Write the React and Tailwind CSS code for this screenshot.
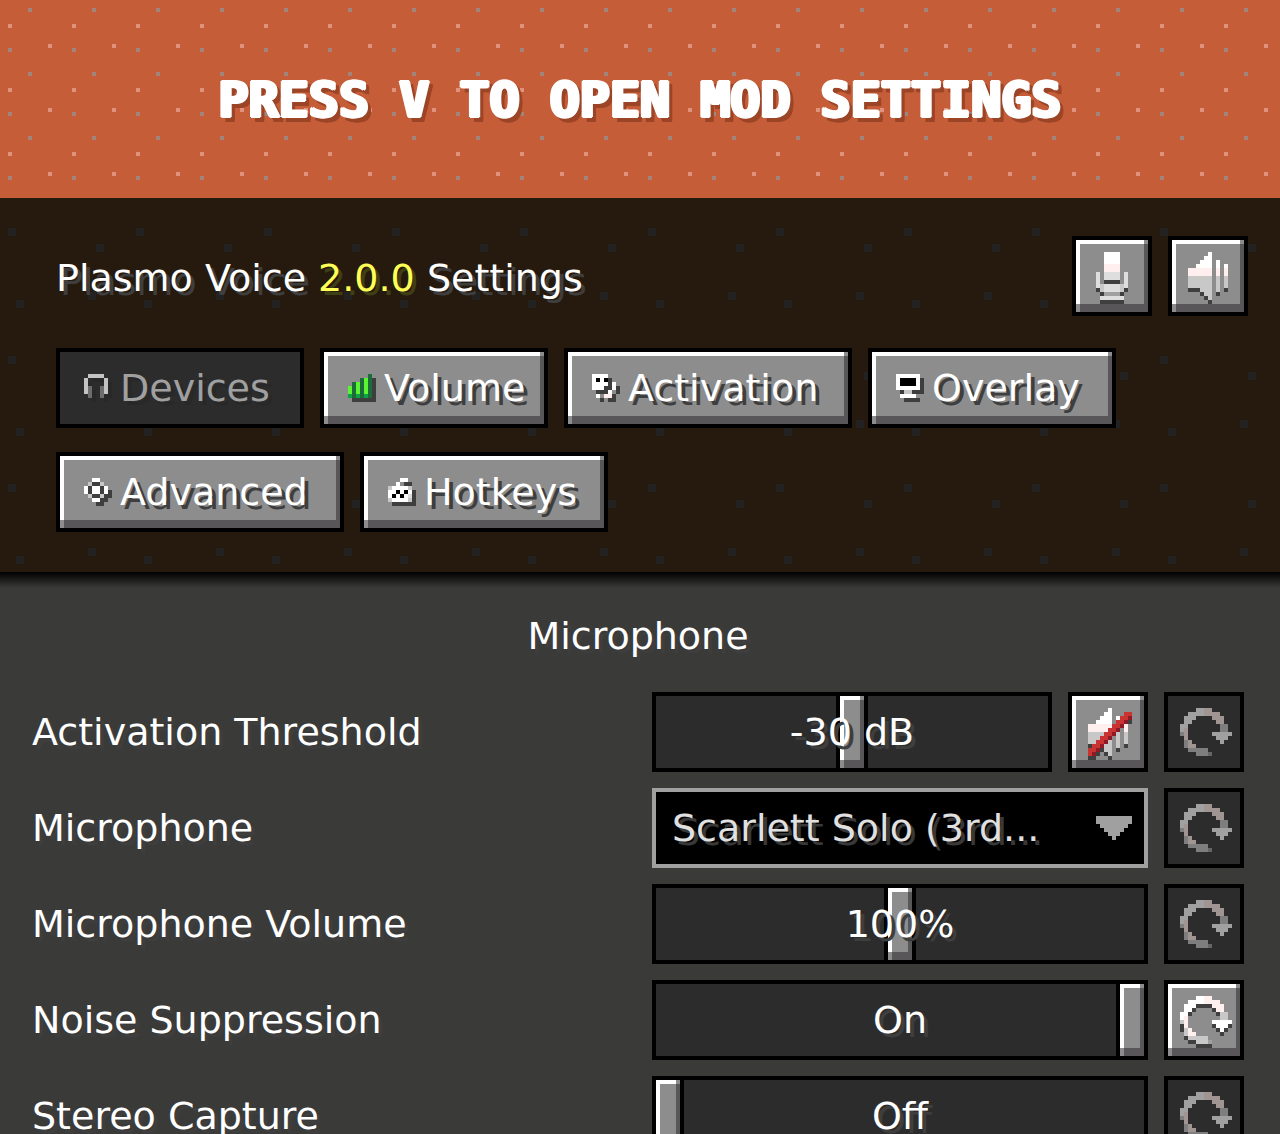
import React, { useState } from "react";

const BRIGHT = {
  W: "#ffffff", P: "#ffefee", L: "#dedede", M: "#c8c8c8", N: "#a0a0a0",
  D: "#3f3f3f", K: "#000000", R: "#c93331", r: "#8d1a26",
  G: "#5cf531", g: "#1d6b3b", e: "#0ba344", H: "#c4c4c4", h: "#6c6c6c",
};
const DIM = { W: "#a0a0a0", P: "#a09593", M: "#7e7e7e", N: "#666666" };

const MIC = [
  "..WWWW..", "..WWWW..", "..WWWW..", "..PPPP..", "..PPPP..", "L.LLLL.L", "L.LLLL.L",
  "L.DDDD.L", "LMLLLLML", "DMLLLLMD", ".DNNNND.", ".LLLLLL.", ".DDDDDD.",
];
const SPEAKER = [
  ".....W", "....WW", "...WWW.W", "..WWWW.W.W", "PPPPPP.P.P", "PPPPPP.P.P", "MMMMMM.M.M",
  "MMMMMM.M.M", "MMMMMM.M.M", "DDDMMM.M.D", "...DMM.D", "....DM", ".....D",
];
const SLASH = [
  "...........", ".........RR", "........RRr", ".......RRrD", "......RRr..", ".....RRr...", "....RRr....",
  "...RRr.....", "..RRr......", "DRRr.......", "RRr........", "RrD........", "DD.........",
];
const RESET = [
  "....WWPP.....", "..WWWWPPPP...", ".WWWDDDDPPP..", ".WWD....DPP..", "WWD......DMM.", "WP........MM.",
  "MP......WWWWW", "DP......DWWWD", "DMP......DWD.", ".MPP......D..", ".DMMMMM......", "..DDMMMN.....", "....DDDD.....",
];
const HEADPHONES = [".HHHH.", "H....H", "H....H", "Hh..hH", "Hh..hH", ".h..h."];
const BARS = [".....g", "...gGg", ".gGgGg", "GgGgGg", "GgGgGg", "egegeg"];
const VOICE = ["WWWW..", "WKWK..", "WWWW.W", "WWW..W", "....W.", ".W.PP."];
const MONITOR = ["WWWWWW", "WKKKKW", "WKKKKW", "WWWWWW", "..MM..", ".WWWW."];
const GEAR = ["..WW..", ".MDDM.", "WDWWDW", "WDWWDW", ".MDDM.", "..WW.."];
const KEYBOARD = ["...WW.", "..W...", "MWWWWM", "WWKWKW", "WKWKWL", "MWWWWM"];
const ARROW = ["WWWWWWWWW", "WWWWWWWWW", ".WWWWWWW.", "..WWWWW..", "...WWW...", "....W...."];

function cells(rows, palette, x, y, fill) {
  return rows.flatMap((row, j) =>
    [...row].map((c, i) =>
      c !== "." && palette[c] ? (
        <rect key={`${i}-${j}`} x={i + x} y={j + y} width="1" height="1" fill={fill || palette[c]} />
      ) : null
    )
  );
}

function SquareIcon({ rows, over, x, palette = BRIGHT }) {
  return (
    <svg viewBox="0 0 18 18" className="size-[72px]" shapeRendering="crispEdges" aria-hidden="true">
      <g>{cells(rows, palette, x, 3)}</g>
      {over && <g>{cells(over, palette, x, 3)}</g>}
    </svg>
  );
}

function TabIcon({ rows, shadow }) {
  return (
    <svg viewBox="0 0 7 7" className="size-7 shrink-0" shapeRendering="crispEdges" aria-hidden="true">
      <g>{cells(rows, BRIGHT, 1, 1, shadow)}</g>
      <g>{cells(rows, BRIGHT, 0, 0)}</g>
    </svg>
  );
}

const BEVEL =
  "border-4 border-black [background:linear-gradient(#8d8d8d,#8d8d8d)_right_top/4px_4px_no-repeat,linear-gradient(#8d8d8d,#8d8d8d)_left_bottom/4px_8px_no-repeat,linear-gradient(#fff,#fff)_left_top/100%_4px_no-repeat,linear-gradient(#fff,#fff)_left_top/4px_100%_no-repeat,linear-gradient(#585658,#585658)_left_bottom/100%_8px_no-repeat,linear-gradient(#585658,#585658)_right_top/4px_100%_no-repeat,#8d8d8d]";
const THUMB =
  "[&::-webkit-slider-thumb]:appearance-none [&::-webkit-slider-thumb]:box-border [&::-webkit-slider-thumb]:h-20 [&::-webkit-slider-thumb]:w-8 [&::-webkit-slider-thumb]:rounded-none [&::-webkit-slider-thumb]:border-4 [&::-webkit-slider-thumb]:border-solid [&::-webkit-slider-thumb]:border-black [&::-webkit-slider-thumb]:[background:linear-gradient(#8d8d8d,#8d8d8d)_right_top/4px_4px_no-repeat,linear-gradient(#8d8d8d,#8d8d8d)_left_bottom/4px_8px_no-repeat,linear-gradient(#fff,#fff)_left_top/100%_4px_no-repeat,linear-gradient(#fff,#fff)_left_top/4px_100%_no-repeat,linear-gradient(#585658,#585658)_left_bottom/100%_8px_no-repeat,linear-gradient(#585658,#585658)_right_top/4px_100%_no-repeat,#8d8d8d]";
const FLAT = "border-4 border-black bg-[#2c2c2c]";
const SHADOW = "[text-shadow:4px_4px_0_#3e3e3e]";

function Dots({ id, size, dot, points }) {
  return (
    <svg className="absolute inset-0 size-full" shapeRendering="crispEdges" aria-hidden="true">
      <pattern id={id} width={size} height={size} patternUnits="userSpaceOnUse">
        {points.map(([x, y, fill]) => (
          <rect key={`${x}-${y}`} x={x} y={y} width={dot} height={dot} fill={fill} />
        ))}
      </pattern>
      <rect width="100%" height="100%" fill={`url(#${id})`} />
    </svg>
  );
}

function SquareButton({ label, disabled, children }) {
  return (
    <button type="button" aria-label={label} disabled={disabled} className={`size-20 shrink-0 ${disabled ? FLAT : BEVEL}`}>
      {children}
    </button>
  );
}

function Tab({ icon, width, active, children }) {
  return (
    <button
      type="button"
      disabled={active}
      className={`flex h-20 items-center gap-2 pl-6 ${width} ${
        active ? `${FLAT} text-[#a0a0a0] [text-shadow:4px_4px_0_#282828]` : `${BEVEL} text-white ${SHADOW}`
      }`}
    >
      <TabIcon rows={icon} shadow={active ? "#282828" : "#3e3e3e"} />
      {children}
    </button>
  );
}

function Slider({ id, initial, max, step = 1, format }) {
  const [value, setValue] = useState(initial);
  return (
    <div className="relative h-20 min-w-0 flex-1">
      <input
        id={id}
        type="range"
        min="0"
        max={max}
        step={step}
        value={value}
        onChange={(e) => setValue(Number(e.target.value))}
        className={`block h-20 w-full appearance-none bg-[#2c2c2c] shadow-[inset_0_0_0_4px_#000] ${THUMB}`}
      />
      <span className={`pointer-events-none absolute inset-0 flex items-center justify-center ${SHADOW}`}>
        {format(value)}
      </span>
    </div>
  );
}

function Row({ id, label, changed, children }) {
  return (
    <div className="flex items-center">
      <label htmlFor={id} className={`flex-1 whitespace-nowrap ${SHADOW}`}>
        {label}
      </label>
      <div className="flex w-[592px] gap-4">
        {children}
        <SquareButton label={`Reset ${label}`} disabled={!changed}>
          <SquareIcon rows={RESET} x={3} palette={changed ? BRIGHT : DIM} />
        </SquareButton>
      </div>
    </div>
  );
}

export default function App() {
  return (
    <div className="flex h-screen flex-col overflow-hidden bg-[#3a3a39] font-['DejaVu_Sans',sans-serif] text-[38px] leading-[48px] text-white">
      <header className="relative shrink-0 bg-[#c65d39] pt-[68px] pb-[66px] text-center">
        <Dots
          id="banner-dots"
          size={64}
          dot={4}
          points={[[28, 8, "#a3827a"], [8, 48, "#a3827a"], [8, 24, "#df937c"], [48, 44, "#df937c"]]}
        />
        <h1 className="relative font-['DejaVu_Sans_Mono',monospace] text-[50px] leading-[64px] font-bold whitespace-nowrap [text-shadow:1px_1px_0_#fff,-1px_-1px_0_#fff,1px_-1px_0_#fff,-1px_1px_0_#fff,2px_0_0_#fff,-2px_0_0_#fff,5px_5px_0_#9c4426,3px_5px_0_#9c4426,5px_3px_0_#9c4426]">
          PRESS V TO OPEN MOD SETTINGS
        </h1>
      </header>

      <section className="relative shrink-0 bg-[#26190d] pt-[38px] pr-8 pb-10 pl-14">
        <Dots
          id="panel-dots"
          size={128}
          dot={8}
          points={[[16, 102, "#222222"], [88, 94, "#222222"], [8, 30, "#222222"], [96, 46, "#222222"]]}
        />
        <div className="relative flex items-center gap-4">
          <h2 className={`flex-1 pt-1 whitespace-nowrap ${SHADOW}`}>
            Plasmo Voice <span className="text-[#ffff55] [text-shadow:4px_4px_0_#3f3f15]">2.0.0</span> Settings
          </h2>
          <SquareButton label="Microphone on">
            <SquareIcon rows={MIC} x={5} />
          </SquareButton>
          <SquareButton label="Sound on">
            <SquareIcon rows={SPEAKER} x={4} />
          </SquareButton>
        </div>
        <nav className="relative mt-8 flex flex-wrap gap-x-4 gap-y-6" aria-label="Settings">
          <Tab icon={HEADPHONES} width="w-[248px]" active>Devices</Tab>
          <Tab icon={BARS} width="w-[228px]">Volume</Tab>
          <Tab icon={VOICE} width="w-[288px]">Activation</Tab>
          <Tab icon={MONITOR} width="w-[248px]">Overlay</Tab>
          <Tab icon={GEAR} width="w-[288px]">Advanced</Tab>
          <Tab icon={KEYBOARD} width="w-[248px]">Hotkeys</Tab>
        </nav>
      </section>

      <main className="min-h-0 flex-1 overflow-y-auto bg-linear-to-b from-black to-transparent bg-[length:100%_16px] bg-no-repeat pt-10 pr-9 pl-8 [scrollbar-width:none]">
        <h3 className={`mb-8 text-center ${SHADOW}`}>Microphone</h3>
        <div className="flex flex-col gap-4">
          <Row id="threshold" label="Activation Threshold">
            <Slider id="threshold" initial={30} max={60} format={(v) => `${v - 60} dB`} />
            <SquareButton label="Test microphone">
              <SquareIcon rows={SPEAKER} over={SLASH} x={4} />
            </SquareButton>
          </Row>
          <Row id="microphone" label="Microphone">
            <div className="relative min-w-0 flex-1">
              <select
                id="microphone"
                className="block h-20 w-full appearance-none border-4 border-[#a0a0a0] bg-black pr-14 pl-4 text-[#e0e0e0] [text-shadow:4px_4px_0_#383838]"
              >
                <option>Scarlett Solo (3rd...</option>
              </select>
              <svg
                viewBox="0 0 9 6"
                className="pointer-events-none absolute top-7 right-4 h-6 w-9"
                shapeRendering="crispEdges"
                aria-hidden="true"
              >
                {cells(ARROW, DIM, 0, 0)}
              </svg>
            </div>
          </Row>
          <Row id="mic-volume" label="Microphone Volume">
            <Slider id="mic-volume" initial={100} max={200} format={(v) => `${v}%`} />
          </Row>
          <Row id="noise" label="Noise Suppression" changed>
            <Slider id="noise" initial={1} max={1} format={(v) => (v ? "On" : "Off")} />
          </Row>
          <Row id="stereo" label="Stereo Capture">
            <Slider id="stereo" initial={0} max={1} format={(v) => (v ? "On" : "Off")} />
          </Row>
        </div>
      </main>
    </div>
  );
}
